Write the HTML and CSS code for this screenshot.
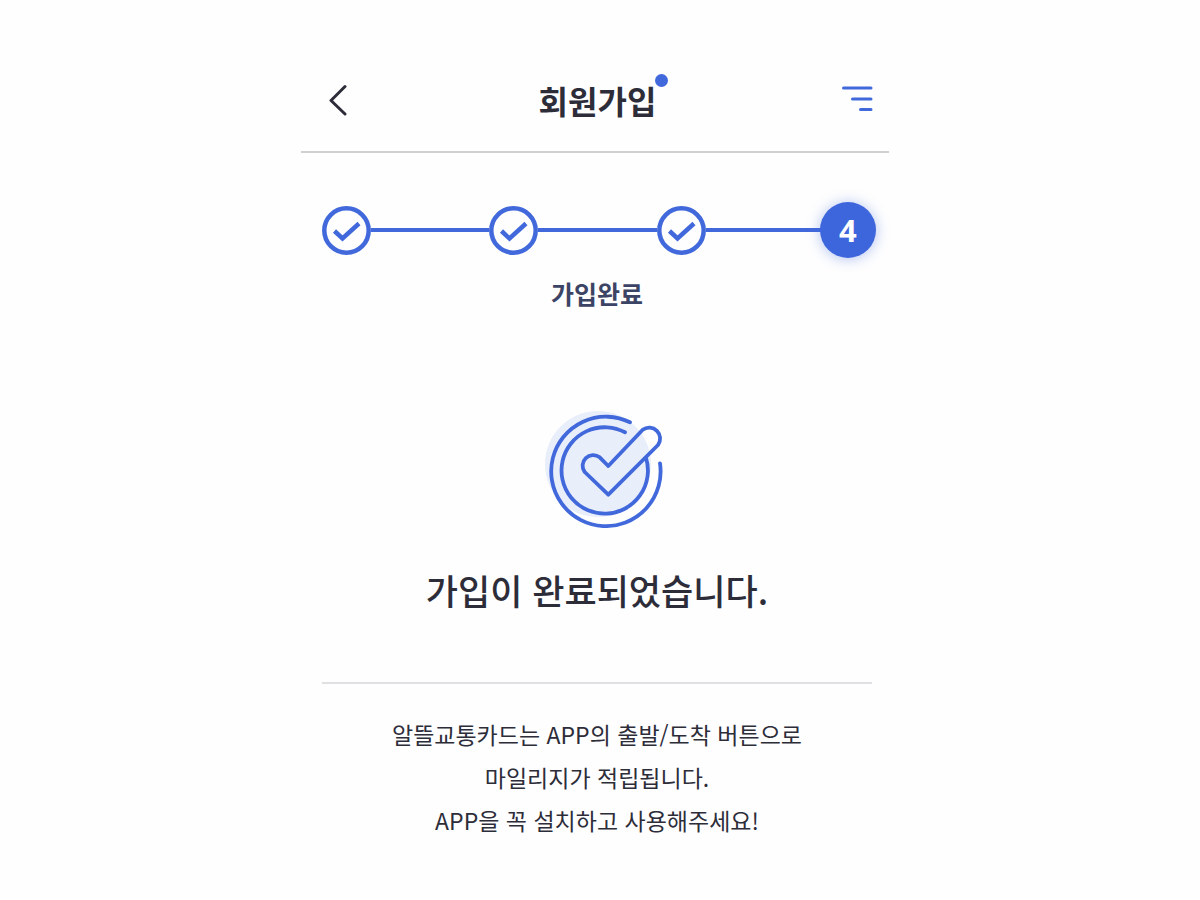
FILE: index.html
```html
<!DOCTYPE html>
<html lang="ko">
<head>
<meta charset="utf-8">
<meta name="viewport" content="width=device-width, initial-scale=1">
<title>회원가입</title>
<link rel="stylesheet" href="styles.css">
</head>
<body>
<div class="page">
  <header class="header">
    <button class="icon-button" type="button" aria-label="뒤로">
      <svg width="26" height="32" viewBox="0 0 26 32" fill="none" stroke="#2d2d3a" stroke-width="3" stroke-linecap="round" stroke-linejoin="round"><path d="M17 2.500 3 16.500 17 30"/></svg>
    </button>
    <h1 class="title">회원가입<span class="dot"></span></h1>
    <button class="icon-button" type="button" aria-label="메뉴">
      <svg width="32" height="28" viewBox="0 0 32 28" fill="none" stroke="#4169dc" stroke-width="3" stroke-linecap="round"><path d="M2.500 2H30M11.500 13H30M19.500 23.500H30"/></svg>
    </button>
  </header>

  <main class="content">
    <ol class="steps">
      <li class="step"><svg width="49" height="49" viewBox="0 0 49 49" fill="none" stroke="#4169dc" stroke-width="4.500"><circle cx="24.500" cy="24.500" r="22.200"/><path d="M12.500 25 20.500 32.500 37 17.500"/></svg></li>
      <li class="line" role="presentation"></li>
      <li class="step"><svg width="49" height="49" viewBox="0 0 49 49" fill="none" stroke="#4169dc" stroke-width="4.500"><circle cx="24.500" cy="24.500" r="22.200"/><path d="M12.500 25 20.500 32.500 37 17.500"/></svg></li>
      <li class="line" role="presentation"></li>
      <li class="step"><svg width="49" height="49" viewBox="0 0 49 49" fill="none" stroke="#4169dc" stroke-width="4.500"><circle cx="24.500" cy="24.500" r="22.200"/><path d="M12.500 25 20.500 32.500 37 17.500"/></svg></li>
      <li class="line" role="presentation"></li>
      <li class="step current" aria-current="step">4</li>
    </ol>
    <p class="step-label">가입완료</p>

    <svg class="done-icon" width="122" height="120" viewBox="13 13 122 120" fill="none" stroke="#4169dc" stroke-width="3.800" stroke-linecap="round" stroke-linejoin="round">
      <circle cx="68" cy="69" r="53" fill="#e9eefb" stroke="none"/>
      <path d="M100 27.300A54.700 54.700 0 1 0 130 68.300"/>
      <path d="M95 37.300A43.200 43.200 0 1 0 116 62.700"/>
      <path d="M78.300 71 69.700 62.300A10.600 10.600 0 0 0 54.700 77L78.300 99.700 128 50A10.900 10.900 0 0 0 112.700 34.800Z"/>
    </svg>
    <h2 class="message">가입이 완료되었습니다.</h2>
    <hr class="divider">
    <p class="note">알뜰교통카드는 APP의 출발/도착 버튼으로<br>마일리지가 적립됩니다.<br>APP을 꼭 설치하고 사용해주세요!</p>
  </main>
</div>
</body>
</html>
```
FILE: styles.css
```css
* { box-sizing: border-box; }

body {
  margin: 0;
  padding: 48px 11px 48px 1px;
  background: #fefefe;
  color: #2d2d3a;
  font-family: "Noto Sans CJK KR", "Noto Sans", sans-serif;
}

.page {
  max-width: 588px;
  margin: 0 auto;
}

.header {
  display: flex;
  align-items: center;
  justify-content: space-between;
  padding: 24px 16px 23px 27px;
  border-bottom: 2px solid #d0d0d2;
}

.icon-button {
  display: flex;
  padding: 0;
  border: 0;
  background: none;
  cursor: pointer;
}

.title {
  position: relative;
  margin: 0;
  font-size: 32px;
  line-height: 56px;
  font-weight: 700;
}

.dot {
  position: absolute;
  top: 2px;
  right: -12px;
  width: 13px;
  height: 13px;
  border-radius: 50%;
  background: #4169dc;
}

.content {
  display: flex;
  flex-direction: column;
  align-items: center;
  padding: 49px 17px 0 21px;
}

.steps {
  display: flex;
  align-items: center;
  align-self: stretch;
  margin: 0 -4px 0 0;
  padding: 0;
  list-style: none;
}

.step { display: flex; }

.line {
  flex: 1;
  height: 4px;
  background: #4169dc;
}

.current {
  align-items: center;
  justify-content: center;
  width: 56px;
  height: 56px;
  margin-left: -4px;
  border-radius: 50%;
  background: #3d66dc;
  box-shadow: 0 1px 14px rgba(61, 102, 220, 0.4);
  color: #fff;
  font-family: "Open Sans", "Noto Sans", sans-serif;
  font-size: 31px;
  line-height: 54px;
  font-weight: 700;
}

.step-label {
  margin: 15px 0 0;
  color: #3c4465;
  font-size: 25px;
  line-height: 40px;
  font-weight: 700;
}

.done-icon { margin: 95px 0 0 13px; }

.message {
  margin: 36px 0 0;
  font-size: 35px;
  line-height: 52px;
  font-weight: 500;
}

.divider {
  align-self: stretch;
  height: 2px;
  margin: 66px 0 0;
  border: 0;
  background: #e0e0e2;
}

.note {
  margin: 29px 0 0;
  font-size: 23px;
  line-height: 43px;
  font-weight: 400;
  text-align: center;
}
```
